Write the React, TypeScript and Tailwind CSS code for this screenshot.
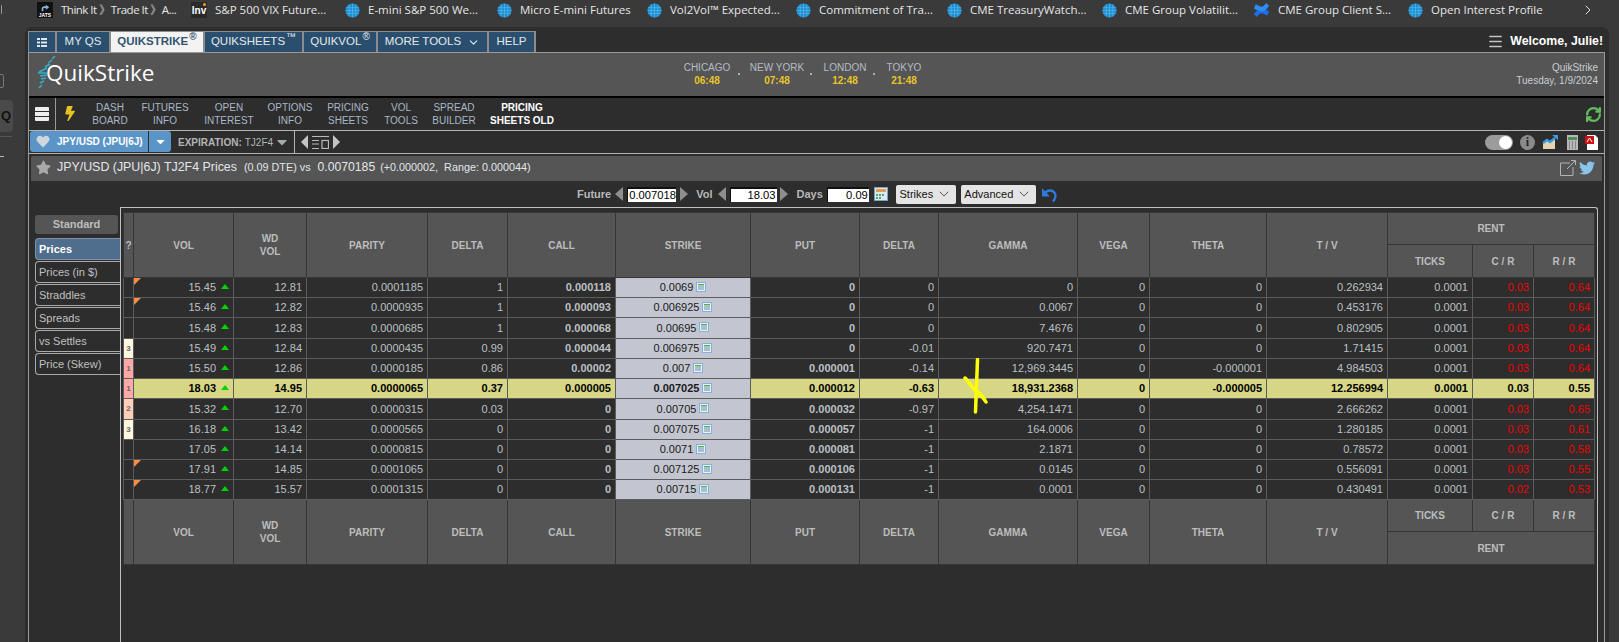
import { ChevronDown, ChevronRight, Menu, RefreshCw } from 'lucide-react';
import { FaBolt, FaHeart, FaStar, FaTwitter, FaCaretDown } from 'react-icons/fa';

function Globe() {
  return (
    <svg viewBox="0 0 16 16" className="h-[15px] w-[15px] shrink-0">
      <circle cx="8" cy="8" r="7.5" fill="#1b8fd2" />
      <g stroke="#5cb8e8" strokeWidth="0.7" fill="none">
        <path d="M1 5h14M0.5 8h15M1 11h14" />
        <path d="M8 0.5v15M4.5 1.5v13M11.5 1.5v13" />
      </g>
    </svg>
  );
}

function JatsIcon() {
  return (
    <span className="flex h-[16px] w-[16px] shrink-0 flex-col items-center justify-end bg-[#111]">
      <svg viewBox="0 0 12 8" className="h-[8px] w-[10px]">
        <path d="M2 8V5a3 3 0 0 1 3-3h2V0l4 3-4 3V4H5a1 1 0 0 0-1 1v3z" fill="#8cb4dc" />
      </svg>
      <span className="text-[5px] font-bold leading-[6px] text-white">JATS</span>
    </span>
  );
}

function InvIcon() {
  return (
    <span className="relative flex h-[16px] w-[16px] shrink-0 items-center justify-center bg-[#2a2a2a] text-[10px] font-bold text-white">
      Inv
      <span className="absolute right-[1px] top-[1px] h-[3px] w-[3px] rounded-full bg-[#f0a020]" />
    </span>
  );
}

function ConfluenceIcon() {
  return (
    <svg viewBox="0 0 18 16" className="h-[16px] w-[17px] shrink-0">
      <path d="M1 12.5c3-4.5 5.5-6 8-6s4 1 8 3l-2 4.500c-3-1.500-4.500-2.500-6-2.500s-2.500 1-5 4z" fill="#1d6fe8" />
      <path d="M17 3.500c-3 4.500-5.500 6-8 6s-4-1-8-3l2-4.500c3 1.500 4.500 2.500 6 2.500s2.500-1 5-4z" fill="#2f8cf5" />
    </svg>
  );
}

const bookmarks = [
  { icon: <JatsIcon />, label: 'Think It 》Trade It 》A...', w: 'w-[154px]', tight: true },
  { icon: <InvIcon />, label: 'S&P 500 VIX Future...', w: 'w-[154px]' },
  { icon: <Globe />, label: 'E-mini S&P 500 We...', w: 'w-[152px]' },
  { icon: <Globe />, label: 'Micro E-mini Futures', w: 'w-[150px]' },
  { icon: <Globe />, label: 'Vol2Vol™ Expected...', w: 'w-[149px]' },
  { icon: <Globe />, label: 'Commitment of Tra...', w: 'w-[151px]' },
  { icon: <Globe />, label: 'CME TreasuryWatch...', w: 'w-[155px]' },
  { icon: <Globe />, label: 'CME Group Volatilit...', w: 'w-[151px]' },
  { icon: <ConfluenceIcon />, label: 'CME Group Client S...', w: 'w-[155px]' },
  { icon: <Globe />, label: 'Open Interest Profile', w: 'w-[172px]' },
];

const tabs = [
  { label: 'MY QS', w: 'w-[54px]' },
  { label: 'QUIKSTRIKE', sup: '®', w: 'w-[94px]', active: true },
  { label: 'QUIKSHEETS', sup: '™', w: 'w-[99px]' },
  { label: 'QUIKVOL', sup: '®', w: 'w-[74px]' },
  { label: 'MORE TOOLS', chevron: true, w: 'w-[111px]' },
  { label: 'HELP', w: 'w-[47px]' },
];

const navItems = [
  { a: 'DASH', b: 'BOARD', w: 'w-[50px]' },
  { a: 'FUTURES', b: 'INFO', w: 'w-[60px]' },
  { a: 'OPEN', b: 'INTEREST', w: 'w-[68px]' },
  { a: 'OPTIONS', b: 'INFO', w: 'w-[54px]' },
  { a: 'PRICING', b: 'SHEETS', w: 'w-[62px]' },
  { a: 'VOL', b: 'TOOLS', w: 'w-[44px]' },
  { a: 'SPREAD', b: 'BUILDER', w: 'w-[62px]' },
  { a: 'PRICING', b: 'SHEETS OLD', w: 'w-[74px]', active: true },
];

const sideTabs = ['Prices', 'Prices (in $)', 'Straddles', 'Spreads', 'vs Settles', 'Price (Skew)'];

type Row = {
  tag?: string;
  flag?: boolean;
  vals: string[];
  cr: string;
  rr: string;
  active?: boolean;
};

// vol, wd vol, parity, delta, call, strike, put, delta, gamma, vega, theta, t/v, ticks
const rows: Row[] = [
  { flag: true, vals: ['15.45', '12.81', '0.0001185', '1', '0.000118', '0.0069', '0', '0', '0', '0', '0', '0.262934', '0.0001'], cr: '0.03', rr: '0.64' },
  { flag: true, vals: ['15.46', '12.82', '0.0000935', '1', '0.000093', '0.006925', '0', '0', '0.0067', '0', '0', '0.453176', '0.0001'], cr: '0.03', rr: '0.64' },
  { vals: ['15.48', '12.83', '0.0000685', '1', '0.000068', '0.00695', '0', '0', '7.4676', '0', '0', '0.802905', '0.0001'], cr: '0.03', rr: '0.64' },
  { tag: '3', vals: ['15.49', '12.84', '0.0000435', '0.99', '0.000044', '0.006975', '0', '-0.01', '920.7471', '0', '0', '1.71415', '0.0001'], cr: '0.03', rr: '0.64' },
  { tag: '1', vals: ['15.50', '12.86', '0.0000185', '0.86', '0.00002', '0.007', '0.000001', '-0.14', '12,969.3445', '0', '-0.000001', '4.984503', '0.0001'], cr: '0.03', rr: '0.64' },
  { tag: '1', active: true, vals: ['18.03', '14.95', '0.0000065', '0.37', '0.000005', '0.007025', '0.000012', '-0.63', '18,931.2368', '0', '-0.000005', '12.256994', '0.0001'], cr: '0.03', rr: '0.55' },
  { tag: '2', vals: ['15.32', '12.70', '0.0000315', '0.03', '0', '0.00705', '0.000032', '-0.97', '4,254.1471', '0', '0', '2.666262', '0.0001'], cr: '0.03', rr: '0.65' },
  { tag: '3', vals: ['16.18', '13.42', '0.0000565', '0', '0', '0.007075', '0.000057', '-1', '164.0006', '0', '0', '1.280185', '0.0001'], cr: '0.03', rr: '0.61' },
  { vals: ['17.05', '14.14', '0.0000815', '0', '0', '0.0071', '0.000081', '-1', '2.1871', '0', '0', '0.78572', '0.0001'], cr: '0.03', rr: '0.58' },
  { flag: true, vals: ['17.91', '14.85', '0.0001065', '0', '0', '0.007125', '0.000106', '-1', '0.0145', '0', '0', '0.556091', '0.0001'], cr: '0.03', rr: '0.55' },
  { flag: true, vals: ['18.77', '15.57', '0.0001315', '0', '0', '0.00715', '0.000131', '-1', '0.0001', '0', '0', '0.430491', '0.0001'], cr: '0.02', rr: '0.53' },
];

const headCols = ['DELTA', 'CALL', 'STRIKE', 'PUT', 'DELTA', 'GAMMA', 'VEGA', 'THETA', 'T / V'];

const tagColor: Record<string, string> = {
  '1': 'bg-[#ffa8a8]',
  '2': 'bg-[#ffcfba]',
  '3': 'bg-[#fff8e0]',
};

function MiniCalc() {
  return (
    <svg viewBox="0 0 10 10" className="mb-[2px] ml-[3px] h-[10px] w-[10px]">
      <rect x="0.5" y="0.5" width="9" height="9" fill="#e8f2fa" stroke="#7fb2d8" />
      <rect x="2" y="2" width="6" height="1.500" fill="#5aa860" />
      <path d="M2 5h6M2 7h6" stroke="#6a8aa8" strokeWidth="1" />
    </svg>
  );
}

function Th({ children, className = '', ...rest }: React.ThHTMLAttributes<HTMLTableCellElement>) {
  return (
    <th
      {...rest}
      className={`border border-[#363636] bg-[#555555] text-center align-middle text-[10px] font-bold leading-[13px] text-[#bdbdbd] ${className}`}
    >
      {children}
    </th>
  );
}

function Sep() {
  return <span className="mt-[1px] h-[2px] w-[2px] rounded-full bg-[#cccccc]" />;
}

function ArrowLeft({ className = '' }: { className?: string }) {
  return <span className={`h-0 w-0 border-y-[7px] border-r-[8px] border-y-transparent border-r-[#8e8e8e] ${className}`} />;
}

function ArrowRight({ className = '' }: { className?: string }) {
  return <span className={`h-0 w-0 border-y-[7px] border-l-[8px] border-y-transparent border-l-[#8e8e8e] ${className}`} />;
}

function Clock({ city, time, w }: { city: string; time: string; w: string }) {
  return (
    <div className={`${w} text-center text-[10px] leading-[13px]`}>
      <div className="whitespace-nowrap text-[#b4bcc6]">{city}</div>
      <div className="font-bold text-[#e8c42c]">{time}</div>
    </div>
  );
}

export default function App() {
  return (
    <div className="flex h-[642px] w-[1619px] flex-col overflow-hidden bg-[#3a3a3a] font-['Liberation_Sans',Arial,sans-serif]">
      {/* browser bookmarks */}
      <div className="flex h-[27px] shrink-0 items-center pb-[7px]">
        <div className="mb-[2px] mr-[35px] h-[9px] w-[2px] rounded-r-[1px] border-r border-[#999999]" />
        {bookmarks.map((b) => (
          <div key={b.label} className={`${b.w} flex shrink-0 items-center gap-[8px]`}>
            {b.icon}
            <span className={`whitespace-nowrap font-['Open_Sans',sans-serif] text-[11.500px] text-[#e6e6e6] ${b.tight ? 'tracking-[-0.5px]' : ''}`}>
              {b.label}
            </span>
          </div>
        ))}
        <ChevronRight className="h-[16px] w-[16px] text-[#dddddd]" strokeWidth={1.5} />
      </div>

      <div className="flex min-h-0 flex-1">
        {/* left browser rail */}
        <div className="flex w-[25px] shrink-0 flex-col">
          <div className="ml-[-4px] mt-[47px] h-[14px] w-[8px] rounded-[2px] border border-[#777777]" />
          <div className="mt-[12px] flex h-[32px] w-[13px] items-center justify-end rounded-r-[4px] bg-[#4a4a4a] pr-[2px] text-[13px] font-bold text-[#111111]">
            Q
          </div>
          <div className="mt-[4px] h-px w-[12px] bg-[#555555]" />
          <div className="mt-[19px] h-px w-[4px] bg-[#bbbbbb]" />
        </div>

        {/* app panel */}
        <div className="mr-[10px] flex min-w-0 flex-1 flex-col rounded-t-[8px] bg-[#2d2d2d] pl-[3px] pr-[4px] pt-[4px]">
          {/* main tabs */}
          <div className="flex h-[21px] shrink-0 items-stretch">
            <div className="flex w-[29px] shrink-0 items-center justify-center border-l border-r-2 border-t border-[#8c8c8c] bg-[#2a4f6e]">
              <svg viewBox="0 0 10 9" className="h-[9px] w-[10px]">
                <path d="M0 0h3v2H0zM4 0h6v2H4zM0 3.500h3v2H0zM4 3.500h6v2H4zM0 7h3v2H0zM4 7h6v2H4z" fill="#e0e6ec" />
              </svg>
            </div>
            {tabs.map((t) => (
              <div
                key={t.label}
                className={`${t.w} flex shrink-0 items-center justify-center border-r-2 border-t border-[#8c8c8c] text-[11.500px] ${
                  t.active ? 'bg-[#f3f3f3] font-semibold text-[#33536f]' : 'bg-[#2a4f6e] text-[#e4e8ec]'
                }`}
              >
                {t.label}
                {t.sup && <sup className="ml-px text-[10px] leading-none">{t.sup}</sup>}
                {t.chevron && <ChevronDown className="ml-[6px] h-[13px] w-[13px]" strokeWidth={2} />}
              </div>
            ))}
            <div className="ml-auto flex items-center pr-[2px]">
              <Menu className="mr-[6px] h-[17px] w-[17px] text-[#c4c4c4]" strokeWidth={2} />
              <span className="text-[12.300px] font-bold text-white">Welcome, Julie!</span>
            </div>
          </div>

          {/* frame */}
          <div className="flex min-h-0 flex-1 flex-col border-l border-r border-t border-[#9a9a9a]">
            {/* logo + clocks */}
            <div className="flex h-[45px] shrink-0 items-center border-b-[2px] border-black bg-[#555555] pb-[2px]">
              <div className="relative flex w-[653px] items-center pl-[17px]">
                <svg viewBox="0 0 20 34" className="absolute left-[8px] top-[-6px] h-[34px] w-[20px]">
                  <path
                    d="M18 0l-3 3M15 4l-4 3M13 8l-5 3M10 12l-8 4M1 17h9M3 20l7-1M4 23l5-1M3 27l4-2M2 32l3-3"
                    stroke="#2fb0c4"
                    strokeWidth="1.500"
                    fill="none"
                  />
                </svg>
                <span className="relative font-['Open_Sans',sans-serif] text-[22.500px] leading-none text-white">
                  QuikStrike
                </span>
              </div>
              <Clock city="CHICAGO" time="06:48" w="w-[50px]" />
              <div className="flex w-[14px] justify-center"><Sep /></div>
              <div className="ml-[3px]"><Clock city="NEW YORK" time="07:48" w="w-[56px]" /></div>
              <div className="flex w-[12px] justify-center"><Sep /></div>
              <div className="ml-[6px]"><Clock city="LONDON" time="12:48" w="w-[44px]" /></div>
              <div className="flex w-[14px] justify-center"><Sep /></div>
              <div className="ml-[5px]"><Clock city="TOKYO" time="21:48" w="w-[36px]" /></div>
              <div className="ml-auto pr-[6px] text-right text-[10px] leading-[13px] text-[#c8ced4]">
                <div>QuikStrike</div>
                <div>Tuesday, 1/9/2024</div>
              </div>
            </div>

            {/* nav */}
            <div className="flex h-[33px] shrink-0 items-stretch border-b border-[#b4b4b4]">
              <div className="ml-[6px] flex w-[20px] shrink-0 items-center">
                <svg viewBox="0 0 14 14" className="h-[14px] w-[14px]">
                  <path d="M0 1a1 1 0 0 1 1-1h12a1 1 0 0 1 1 1v3H0zM0 5h14v4H0zM0 10h14v3a1 1 0 0 1-1 1H1a1 1 0 0 1-1-1z" fill="#eeeeee" />
                </svg>
              </div>
              <div className="w-px bg-[#9a9a9a]" />
              <div className="ml-[8px] flex w-[21px] shrink-0 items-start pt-[8px]">
                <FaBolt className="h-[15px] w-[12px] -skew-x-6 text-[#e4c322]" />
              </div>
              {navItems.map((n) => (
                <div
                  key={n.a + n.b}
                  className={`${n.w} shrink-0 pt-[3px] text-center text-[10px] leading-[13px] ${
                    n.active ? 'font-bold text-white' : 'text-[#a9b7c6]'
                  }`}
                >
                  <div className="whitespace-nowrap">{n.a}</div>
                  <div className="whitespace-nowrap">{n.b}</div>
                </div>
              ))}
              <div className="ml-auto flex items-center pr-[2px]">
                <RefreshCw className="h-[17px] w-[17px] text-[#62bb5e]" strokeWidth={3.2} />
              </div>
            </div>

            {/* symbol bar */}
            <div className="flex h-[23px] shrink-0 items-stretch border-b border-[#b4b4b4]">
              <div className="ml-px flex h-[21px] w-[118px] shrink-0 items-center rounded-l-[3px] bg-[#5b95c8] pl-[6px]">
                <FaHeart className="h-[13px] w-[14px] text-[#cfd6dc]" />
                <span className="ml-[7px] whitespace-nowrap text-[10px] font-bold text-white">JPY/USD (JPU|6J)</span>
              </div>
              <div className="ml-px flex h-[21px] w-[22px] shrink-0 items-center justify-center rounded-r-[3px] bg-[#5b95c8]">
                <FaCaretDown className="h-[13px] w-[13px] text-white" />
              </div>
              <div className="ml-[7px] flex w-[117px] shrink-0 items-center whitespace-nowrap border-r border-[#b4b4b4] text-[10px] text-[#b4b4b4]">
                <span className="font-bold">EXPIRATION:</span>
                <span className="ml-[3px]">TJ2F4</span>
                <FaCaretDown className="ml-[1px] h-[16px] w-[16px] text-[#a8a8a8]" />
              </div>
              <div className="ml-[6px] flex items-center">
                <span className="h-0 w-0 border-y-[7px] border-r-[7px] border-y-transparent border-r-[#c4c4c4]" />
                <svg viewBox="0 0 17 13" className="ml-[4px] h-[13px] w-[17px]">
                  <path d="M0 .5h17M0 4.500h7M0 8h7M0 12.500h7" stroke="#b8b8b8" strokeWidth="1.200" />
                  <rect x="10" y="4.500" width="6.500" height="8" fill="none" stroke="#b8b8b8" strokeWidth="1.200" />
                </svg>
                <span className="ml-[4px] h-0 w-0 border-y-[7px] border-l-[7px] border-y-transparent border-l-[#c4c4c4]" />
              </div>
              <div className="ml-auto flex items-center pr-[6px]">
                <div className="flex h-[15px] w-[28px] items-center justify-end rounded-full bg-[#9c9c9c] pr-[1px]">
                  <div className="h-[13px] w-[13px] rounded-full bg-white" />
                </div>
                <div className="ml-[7px] flex h-[15px] w-[15px] items-center justify-center rounded-full bg-[#8a8a8a] font-['Liberation_Serif',serif] text-[12px] font-bold text-[#222222]">
                  i
                </div>
                <svg viewBox="0 0 16 16" className="ml-[7px] h-[16px] w-[16px]">
                  <path d="M1 9l4-3 3 2 5-4v11H1z" fill="#e4d4b4" />
                  <path d="M1 9l4-3 3 2 5-4" fill="none" stroke="#3b9be0" strokeWidth="2.400" />
                  <path d="M10 1h6v5z" fill="#3b9be0" />
                </svg>
                <svg viewBox="0 0 11 15" className="ml-[9px] h-[15px] w-[11px]">
                  <rect width="11" height="15" fill="#b8b8b8" />
                  <rect x="1" y="2" width="9" height="3" fill="#4f8f5c" />
                  <path d="M2 7h1M5 7h1M8 7h1M2 9h1M5 9h1M8 9h1M2 11h1M5 11h1M8 11h1M2 13h1M5 13h1M8 13h1" stroke="#555555" />
                </svg>
                <svg viewBox="0 0 13 15" className="ml-[7px] h-[15px] w-[13px]">
                  <path d="M2 0h8l3 3v12H2z" fill="#ffffff" />
                  <rect y="1" width="9" height="8" fill="#cc1111" />
                  <path d="M2 7l2.500-4L7 7" fill="none" stroke="#ffffff" strokeWidth="1" />
                </svg>
              </div>
            </div>

            {/* title */}
            <div className="mx-[2px] mt-[2px] flex h-[25px] shrink-0 items-center rounded-t-[2px] bg-[#555555] pb-[2px] pl-[5px] text-[#e2e6ea]">
              <FaStar className="h-[15px] w-[15px] text-[#a9a9a9]" />
              <span className="ml-[6px] whitespace-nowrap text-[12.400px]">JPY/USD (JPU|6J) TJ2F4 Prices</span>
              <span className="ml-[7px] whitespace-nowrap text-[10.800px]">(0.09 DTE) vs</span>
              <span className="ml-[7px] whitespace-nowrap text-[12.200px]">0.0070185</span>
              <span className="ml-[5px] whitespace-nowrap text-[10.800px]">(+0.000002,</span>
              <span className="ml-[6px] whitespace-nowrap text-[10.800px]">Range: 0.000044)</span>
              <div className="ml-auto flex items-center pr-[7px]">
                <svg viewBox="0 0 16 16" className="h-[16px] w-[16px]">
                  <path d="M10 3H.5v12.500H13V7" fill="none" stroke="#b4b4b4" />
                  <path d="M7 9l8-8M11 .5h4.500V5" fill="none" stroke="#b4b4b4" />
                </svg>
                <FaTwitter className="ml-[3px] h-[16px] w-[16px] text-[#8cc3ea]" />
              </div>
            </div>

            {/* what-if controls */}
            <div className="flex h-[26px] shrink-0 items-center text-[11px]">
              <span className="ml-[548px] font-bold text-[#b8b8b8]">Future</span>
              <ArrowLeft className="ml-[4px]" />
              <input readOnly value="0.007018" className="ml-[4px] h-[15px] w-[49px] border-l border-t-2 border-[#111111] bg-white pl-px text-[11.200px] text-black outline-none" />
              <ArrowRight className="ml-[4px]" />
              <span className="ml-[8px] font-bold text-[#b8b8b8]">Vol</span>
              <ArrowLeft className="ml-[5px]" />
              <input readOnly value="18.03" className="ml-[4px] h-[15px] w-[47px] border-l border-t-2 border-[#111111] bg-white pr-px text-right text-[11.200px] text-black outline-none" />
              <ArrowRight className="ml-[3px]" />
              <span className="ml-[9px] font-bold text-[#b8b8b8]">Days</span>
              <input readOnly value="0.09" className="ml-[4px] h-[15px] w-[42px] border-l border-t-2 border-[#111111] bg-white pr-px text-right text-[11.200px] text-black outline-none" />
              <svg viewBox="0 0 14 14" className="ml-[5px] h-[14px] w-[14px]">
                <rect x="0.5" y="0.5" width="13" height="13" fill="#dce8f4" stroke="#6fa4d4" />
                <rect x="2" y="2" width="10" height="3" fill="#e89a50" />
                <path d="M2 7h2v2H2zM5 7h2v2H5zM8 7h2v2H8zM2 10h2v2H2zM5 10h2v2H5z" fill="#5aa860" />
              </svg>
              <div className="ml-[8px] flex h-[19px] w-[60px] items-center justify-center rounded-[2px] bg-[#e4e4e4] text-[11px] text-[#111111]">
                Strikes
                <ChevronDown className="ml-[3px] h-[16px] w-[16px] text-[#555555]" strokeWidth={1.500} />
              </div>
              <div className="ml-[5px] flex h-[19px] w-[75px] items-center justify-center rounded-[2px] bg-[#e4e4e4] text-[11px] text-[#111111]">
                Advanced
                <ChevronDown className="ml-[3px] h-[16px] w-[16px] text-[#555555]" strokeWidth={1.500} />
              </div>
              <svg viewBox="0 0 17 17" className="ml-[5px] h-[17px] w-[17px]">
                <path d="M4 7C6.500 3.500 12 3.500 14 7.500c1.200 2.800-.200 5.800-2 8" fill="none" stroke="#2f78dc" strokeWidth="2.400" />
                <path d="M1 2v8.500h8z" fill="#2f78dc" />
              </svg>
            </div>

            {/* body */}
            <div className="flex min-h-0 flex-1">
              <div className="w-[91px] shrink-0 pl-[6px] pt-[8px]">
                <div className="flex h-[19px] w-[83px] items-center justify-center rounded-[3px] bg-[#555555] text-[11px] font-bold text-[#bdbdbd]">
                  Standard
                </div>
                <div className="mt-[4px] flex flex-col gap-[1px]">
                  {sideTabs.map((t, i) => (
                    <div
                      key={t}
                      className={`flex h-[22px] items-center rounded-l-[4px] border-b border-l border-t pl-[3px] text-[11px] ${
                        i === 0
                          ? 'border-[#7d93aa] bg-[#4f6d8c] font-bold text-white'
                          : 'border-[#a9a9a9] text-[#c0c0c0]'
                      }`}
                    >
                      {t}
                    </div>
                  ))}
                </div>
              </div>

              <div className="relative mr-[6px] min-w-0 flex-1 rounded-tr-[3px] border-l border-r border-t border-[#bfbfc6] pl-[2px] pt-[4px]">
                <table className="w-[1471px] table-fixed border-collapse">
                  <colgroup>
                    <col className="w-[10px]" />
                    <col className="w-[100px]" />
                    <col className="w-[73px]" />
                    <col className="w-[121px]" />
                    <col className="w-[80px]" />
                    <col className="w-[108px]" />
                    <col className="w-[135px]" />
                    <col className="w-[109px]" />
                    <col className="w-[79px]" />
                    <col className="w-[139px]" />
                    <col className="w-[72px]" />
                    <col className="w-[117px]" />
                    <col className="w-[121px]" />
                    <col className="w-[85px]" />
                    <col className="w-[61px]" />
                    <col className="w-[61px]" />
                  </colgroup>
                  <thead>
                    <tr className="h-[32px]">
                      <Th rowSpan={2} className="text-[8px]">?</Th>
                      <Th rowSpan={2}>VOL</Th>
                      <Th rowSpan={2}>WD<br />VOL</Th>
                      <Th rowSpan={2}>PARITY</Th>
                      {headCols.map((h, i) => <Th key={i} rowSpan={2}>{h}</Th>)}
                      <Th colSpan={3}>RENT</Th>
                    </tr>
                    <tr className="h-[33px]">
                      <Th>TICKS</Th>
                      <Th>C / R</Th>
                      <Th>R / R</Th>
                    </tr>
                  </thead>
                  <tbody>
                    {rows.map((r, i) => {
                      const tone = r.active ? 'bg-[#d6d684] font-bold text-black' : 'text-[#bcc0c4]';
                      const cell = `border border-[#5c5c5c] px-[4px] text-right text-[11px] leading-none ${tone}`;
                      return (
                        <tr key={r.vals[5]} className={i === 2 || i === 6 ? 'h-[21px]' : 'h-[20px]'}>
                          <td className={`border border-[#5c5c5c] text-center text-[8px] font-bold leading-none text-[#666666] ${r.tag ? tagColor[r.tag] : ''}`}>
                            {r.tag}
                          </td>
                          <td className={`relative ${cell}`}>
                            {r.flag && (
                              <span className="absolute left-0 top-0 h-0 w-0 border-r-[7px] border-t-[7px] border-r-transparent border-t-[#ff8c42]" />
                            )}
                            <span className="inline-flex items-center">
                              {r.vals[0]}
                              <span className="mb-[3px] ml-[5px] h-0 w-0 border-x-[4.500px] border-b-[5px] border-x-transparent border-b-[#00d400]" />
                            </span>
                          </td>
                          {r.vals.slice(1, 5).map((v, j) => (
                            <td key={j} className={`${cell} ${j === 3 ? 'font-bold' : ''}`}>{v}</td>
                          ))}
                          <td className="border border-[#5c5c5c] bg-[#c3c6d0] text-center text-[11px] leading-none text-[#1a1a1a]">
                            <span className="inline-flex items-center">
                              <span className={r.active ? 'font-bold' : ''}>{r.vals[5]}</span>
                              <MiniCalc />
                            </span>
                          </td>
                          {r.vals.slice(6, 13).map((v, j) => (
                            <td key={j} className={`${cell} ${j === 0 ? 'font-bold' : ''}`}>{v}</td>
                          ))}
                          <td className={`border border-[#5c5c5c] px-[4px] text-right text-[11px] leading-none ${r.active ? 'bg-[#d6d684] font-bold text-black' : 'text-[#f00000]'}`}>{r.cr}</td>
                          <td className={`border border-[#5c5c5c] px-[4px] text-right text-[11px] leading-none ${r.active ? 'bg-[#d6d684] font-bold text-black' : 'text-[#f00000]'}`}>{r.rr}</td>
                        </tr>
                      );
                    })}
                  </tbody>
                  <tfoot>
                    <tr className="h-[32px]">
                      <Th rowSpan={2} />
                      <Th rowSpan={2}>VOL</Th>
                      <Th rowSpan={2}>WD<br />VOL</Th>
                      <Th rowSpan={2}>PARITY</Th>
                      {headCols.map((h, i) => <Th key={i} rowSpan={2}>{h}</Th>)}
                      <Th>TICKS</Th>
                      <Th>C / R</Th>
                      <Th>R / R</Th>
                    </tr>
                    <tr className="h-[33px]">
                      <Th colSpan={3}>RENT</Th>
                    </tr>
                  </tfoot>
                </table>

                {/* marker scribble over the table */}
                <svg viewBox="0 0 26 56" className="absolute left-[842px] top-[150px] h-[56px] w-[26px]">
                  <path d="M14.500 1.500L12.500 54M2 20c3 2 6 9 10 12s7 5 11 12" fill="none" stroke="#ffff00" strokeWidth="3.500" strokeLinecap="round" />
                </svg>
              </div>
            </div>
          </div>
        </div>
      </div>
    </div>
  );
}
